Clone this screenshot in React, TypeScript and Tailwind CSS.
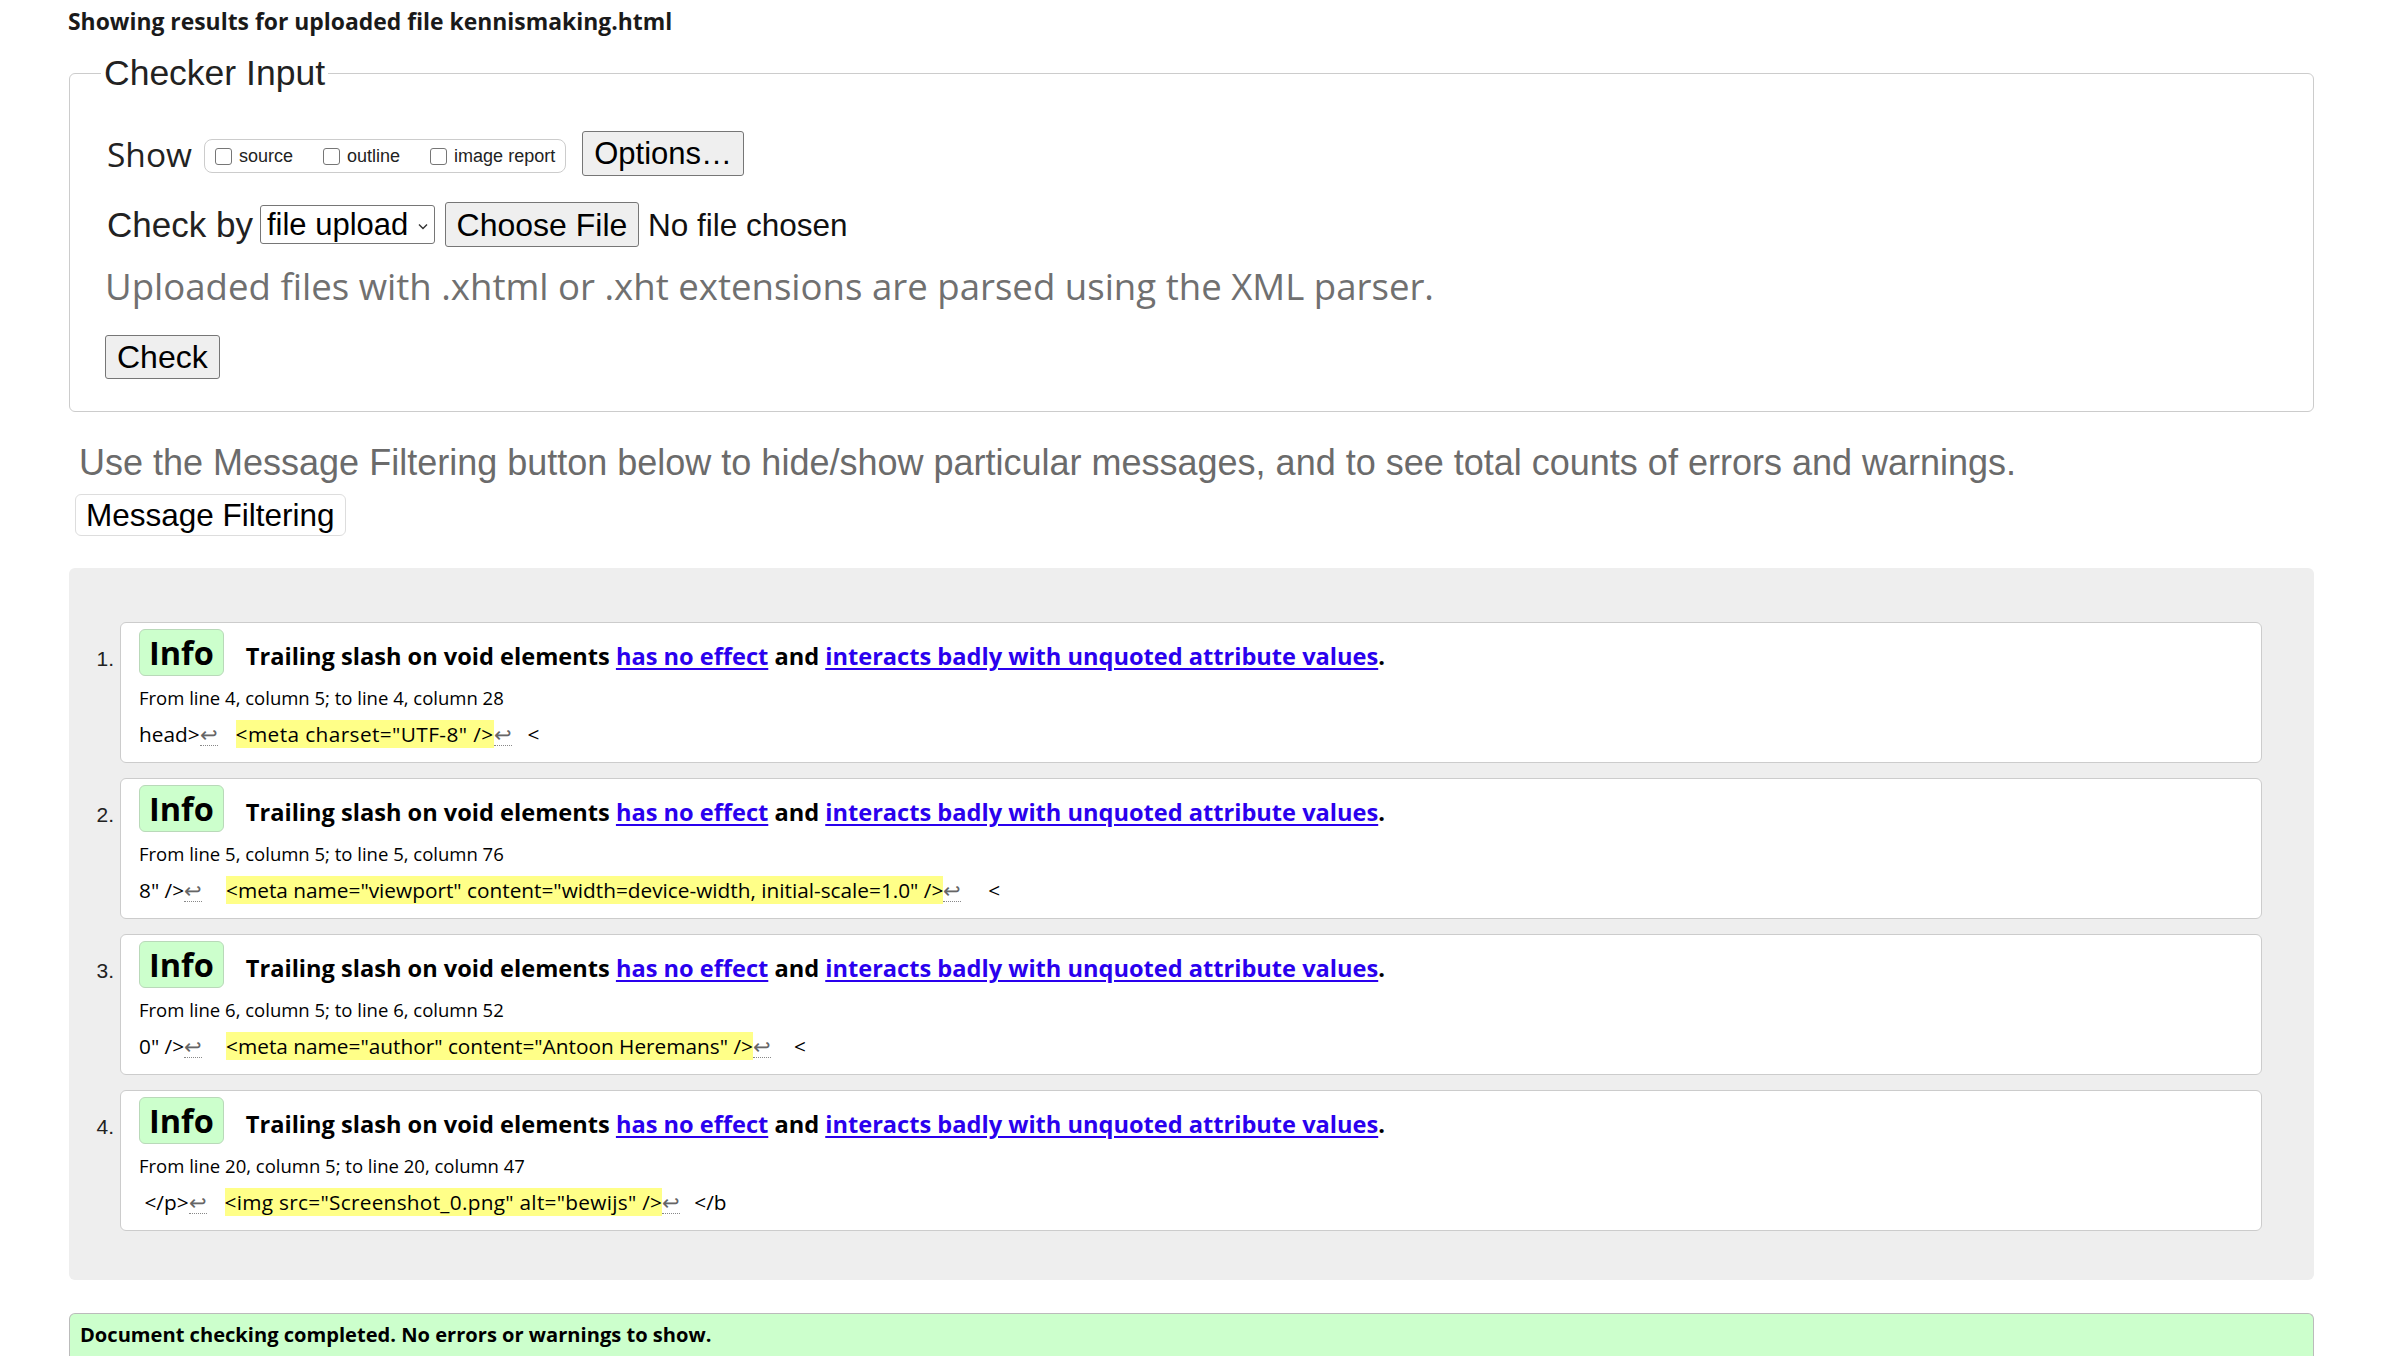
import React from 'react';

const comic = "font-['Open_Sans',sans-serif]";
const arial = "font-['Liberation_Sans',Arial,sans-serif]";

type Msg = {
  from: string;
  before: string;
  mark: string;
  after: string;
  gapBefore: string;
  gapAfter: string;
  track: string;
};

const messages: Msg[] = [
  {
    from: 'From line 4, column 5; to line 4, column 28',
    before: 'head>',
    mark: '<meta charset="UTF-8" />',
    after: '<',
    gapBefore: 'w-[18px]',
    gapAfter: 'w-[16px]',
    track: 'tracking-[0.4px]',
  },
  {
    from: 'From line 5, column 5; to line 5, column 76',
    before: '8" />',
    mark: '<meta name="viewport" content="width=device-width, initial-scale=1.0" />',
    after: '<',
    gapBefore: 'w-[24px]',
    gapAfter: 'w-[27px]',
    track: 'tracking-normal',
  },
  {
    from: 'From line 6, column 5; to line 6, column 52',
    before: '0" />',
    mark: '<meta name="author" content="Antoon Heremans" />',
    after: '<',
    gapBefore: 'w-[24px]',
    gapAfter: 'w-[23px]',
    track: 'tracking-normal',
  },
  {
    from: 'From line 20, column 5; to line 20, column 47',
    before: ' </p>',
    mark: '<img src="Screenshot_0.png" alt="bewijs" />',
    after: '</b',
    gapBefore: 'w-[18px]',
    gapAfter: 'w-[14px]',
    track: 'tracking-[0.28px]',
  },
];

function Lf() {
  return (
    <span className="inline-block leading-[22px] text-[#666] border-b border-dotted border-[#888]">↩</span>
  );
}

function Checkbox({ label }: { label: string }) {
  return (
    <label className="flex items-center">
      <span className="w-[17px] h-[17px] rounded-[3px] border border-[#767676] bg-white" />
      <span className="ml-[7px] text-[18px] leading-[22px] text-[#222]">{label}</span>
    </label>
  );
}

function MessageItem({ n, msg }: { n: number; msg: Msg }) {
  return (
    <div className="flex items-start">
      <span className={`${arial} w-[51px] shrink-0 pr-[6px] pt-[25px] text-right text-[21px] leading-[24px] text-[#222]`}>
        {n}.
      </span>
      <div className={`${comic} flex-1 h-[141px] bg-white border border-[#cccccc] rounded-md px-[18px] pt-[6px] text-black`}>
        <div className="flex items-baseline h-[47px]">
          <span className="h-[47px] px-[9px] rounded-[6px] border border-[#b9d9b9] bg-[#ccffcc] text-[32.5px] font-bold leading-[45px]">
            Info
          </span>
          <p className="ml-[22px] text-[23.6px] font-bold leading-[30px]">
            Trailing slash on void elements{' '}
            <a href="#" className="text-[#2a00ee] underline underline-offset-[3px]">has no effect</a> and{' '}
            <a href="#" className="text-[#2a00ee] underline underline-offset-[3px]">
              interacts badly with unquoted attribute values
            </a>
            .
          </p>
        </div>
        <p className="mt-[9px] text-[18.5px] leading-[26px]">{msg.from}</p>
        <div className="mt-[9px] h-[28px] text-[20.8px] leading-[28px] whitespace-pre">
          <span>{msg.before}</span>
          <Lf />
          <span className={`inline-block ${msg.gapBefore}`} />
          <span className={`inline-block h-[28px] bg-[#ffff88] ${msg.track}`}>{msg.mark}</span>
          <Lf />
          <span className={`inline-block ${msg.gapAfter}`} />
          <span>{msg.after}</span>
        </div>
      </div>
    </div>
  );
}

export default function App() {
  return (
    <div className={`${arial} min-h-screen bg-white pl-[69px] pr-[75px] text-[#111]`}>
      <p className={`${comic} pt-[8px] text-[22.9px] font-bold leading-[28px] text-[#1a1a1a] -ml-[1px]`}>
        Showing results for uploaded file kennismaking.html
      </p>

      <fieldset className="mt-[19px] border border-[#cccccc] rounded-md pl-[31px] pb-[32px]">
        <legend className="px-[3px] text-[35.5px] leading-[36px] text-[#222]">Checker Input</legend>

        <div className="mt-[40px] pl-[6px] flex items-center h-[45px]">
          <span className={`${comic} text-[33.5px] leading-[40px] text-[#222]`}>Show</span>
          <div className="ml-[12px] mt-[5px] h-[34px] flex items-center rounded-lg border border-[#cccccc] px-[10px] gap-[30px]">
            <Checkbox label="source" />
            <Checkbox label="outline" />
            <Checkbox label="image report" />
          </div>
          <button className="ml-[16px] h-[45px] px-[11px] rounded-[3px] border border-[#767676] bg-[#efefef] text-[31px] leading-[40px] text-black">
            Options…
          </button>
        </div>

        <div className="mt-[26px] pl-[6px] flex items-center h-[45px]">
          <span className="text-[35px] leading-[40px] text-[#222]">Check by</span>
          <div className="ml-[7px] h-[39px] w-[175px] flex items-center justify-between rounded-[3px] border border-[#767676] bg-white pl-[6px] pr-[6px]">
            <span className="text-[31px] leading-[37px] text-black">file upload</span>
            <svg width="10" height="7" viewBox="0 0 10 7" className="mt-[4px]">
              <path d="M1 1.5 L5 5.5 L9 1.5" fill="none" stroke="#333" strokeWidth="1.4" />
            </svg>
          </div>
          <button className="ml-[10px] h-[45px] w-[194px] rounded-[3px] border border-[#767676] bg-[#efefef] text-[32px] leading-[40px] text-black">
            Choose File
          </button>
          <span className="ml-[9px] text-[31.5px] leading-[40px] text-[#111]">No file chosen</span>
        </div>

        <p className={`${comic} mt-[19px] pl-[4px] text-[36.6px] leading-[40px] text-[#707070]`}>
          Uploaded files with .xhtml or .xht extensions are parsed using the XML parser.
        </p>

        <button className="mt-[29px] ml-[4px] h-[44px] px-[11px] rounded-[3px] border border-[#767676] bg-[#efefef] text-[32px] leading-[40px] text-black">
          Check
        </button>
      </fieldset>

      <p className="mt-[31px] pl-[10px] text-[36px] leading-[40px] text-[#6b6b6b]">
        Use the Message Filtering button below to hide/show particular messages, and to see total counts of errors and warnings.
      </p>
      <button className="mt-[11px] ml-[6px] h-[42px] px-[10px] rounded-md border border-[#dddddd] bg-white text-[31.5px] leading-[38px] text-black">
        Message Filtering
      </button>

      <div className="mt-[32px] bg-[#eeeeee] rounded-md pt-[54px] pb-[49px] pr-[52px] flex flex-col gap-[15px]">
        {messages.map((m, i) => (
          <MessageItem key={i} n={i + 1} msg={m} />
        ))}
      </div>

      <div className={`${comic} mt-[33px] bg-[#ccffcc] border-t border-x border-[#bbbbbb] rounded-t-md pl-[10px] pt-[9px] pb-[12px]`}>
        <p className="text-[20.1px] font-bold leading-[24px] text-black">
          Document checking completed. No errors or warnings to show.
        </p>
      </div>
    </div>
  );
}
